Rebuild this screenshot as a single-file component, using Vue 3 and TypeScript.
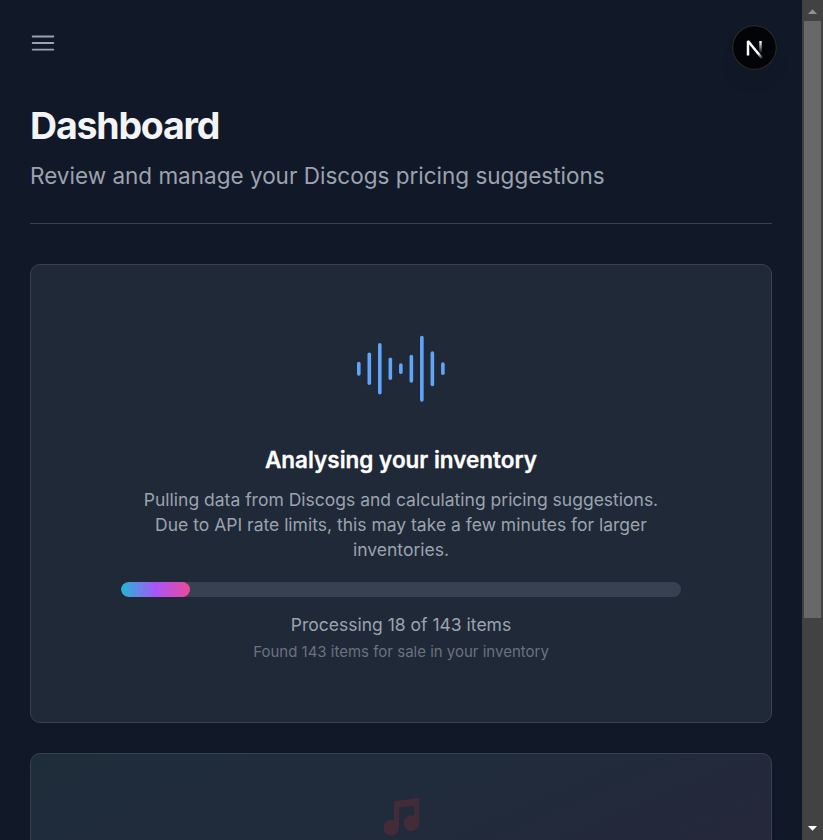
<script setup lang="ts">
interface Bar { x: number; h: number }

const heights: number[] = [14, 32.5, 51.5, 22.5, 10.7, 28, 66, 35, 12.7]
const bars: Bar[] = heights.map((h, i) => ({ x: 2.8 + i * 10.51, h }))

const processed = 18
const total = 143
const percent = 12.4
</script>

<template>
  <div class="window">
    <main class="page">
      <header class="topbar">
        <button class="menu" aria-label="Menu">
          <svg width="30" height="30" viewBox="0 0 24 24" fill="none" stroke="currentColor" stroke-width="1.5" stroke-linecap="round">
            <path d="M3.75 6.75h16.5M3.75 12h16.5M3.75 17.25h16.5" />
          </svg>
        </button>
      </header>

      <section class="heading">
        <h1>Dashboard</h1>
        <p>Review and manage your Discogs pricing suggestions</p>
      </section>

      <section class="card progress-card">
        <svg class="wave" width="90" height="87" viewBox="0 0 90 87">
          <rect v-for="b in bars" :key="b.x" :x="b.x - 1.8" :y="43.7 - b.h / 2" width="3.6" :height="b.h" rx="1.8" fill="#60a5fa" />
        </svg>
        <h2>Analysing your inventory</h2>
        <p class="description">
          Pulling data from Discogs and calculating pricing suggestions. Due to API rate limits, this may take a few minutes for larger inventories.
        </p>
        <div class="track"><div class="fill" :style="{ width: percent + '%' }"></div></div>
        <p class="status">Processing {{ processed }} of {{ total }} items</p>
        <p class="found">Found {{ total }} items for sale in your inventory</p>
      </section>

      <section class="card music-card">
        <svg width="36" height="38" viewBox="0 0 36 38" fill="#432c37">
          <path d="M10 3.2 35.2 0v25.2a7.8 7.8 0 1 1-5-7.3V8L15 9.6v20a7.8 7.8 0 1 1-5-7.3z" />
        </svg>
      </section>
    </main>

    <aside class="scrollbar">
      <svg class="arrow" width="21" height="21" viewBox="0 0 21 21"><path d="M6 14 10.5 9.3 15 14z" fill="#929292" /></svg>
      <div class="thumb"></div>
      <svg class="arrow down" width="21" height="21" viewBox="0 0 21 21"><path d="M6 7h9l-4.5 4.8z" fill="#fff" /></svg>
    </aside>

    <div class="badge">
      <svg width="45" height="45" viewBox="0 0 45 45" fill="none">
        <defs>
          <linearGradient id="diag" x1="9.96" y1="11.12" x2="15.48" y2="17.97" gradientUnits="userSpaceOnUse">
            <stop stop-color="#fff" /><stop offset=".604" stop-color="#fff" stop-opacity="0" />
          </linearGradient>
          <linearGradient id="stem" x1="11.82" y1="1.4" x2="11.79" y2="11" gradientUnits="userSpaceOnUse">
            <stop stop-color="#fff" /><stop offset="1" stop-color="#fff" stop-opacity="0" />
          </linearGradient>
        </defs>
        <g transform="translate(12.9 14.7) scale(1.32 1.25)" stroke-width="1.86" stroke-linejoin="bevel">
          <path d="M13.3 15.2 2.34 1v11.6" stroke="url(#diag)" />
          <path d="M11.825 1.1v11.6" stroke="url(#stem)" />
        </g>
      </svg>
    </div>
  </div>
</template>

<style>
body { margin: 0; overflow: hidden; background: #111827; }
</style>

<style scoped>
* { box-sizing: border-box; }
h1, h2, p { margin: 0; }
.window {
  position: relative;
  display: flex;
  width: 823px;
  height: 840px;
  overflow: hidden;
  background: #111827;
  font-family: Inter, "Liberation Sans", sans-serif;
}
.page { flex: 1; min-width: 0; height: 840px; overflow: hidden; padding: 28px 30px 0; }
.topbar { display: flex; height: 75px; }
.menu { display: flex; width: 30px; height: 30px; margin-left: -2px; padding: 0; border: 0; background: none; color: #9ca3af; }
.heading { height: 121px; border-bottom: 1px solid #374151; }
h1 { font-size: 37.5px; line-height: 45px; font-weight: 700; letter-spacing: -0.032em; color: #f3f4f6; }
.heading p { margin-top: 10px; font-size: 22.5px; line-height: 35px; color: #9ca3af; }
.card { display: flex; flex-direction: column; align-items: center; border: 1px solid #374151; border-radius: 10px; background: #1f2937; }
.progress-card { height: 459px; margin-top: 40px; padding-top: 60px; }
.wave { display: block; }
h2 { margin-top: 30px; font-size: 22.5px; line-height: 35px; font-weight: 600; color: #fff; -webkit-text-stroke: 0.3px #fff; }
.description { width: 540px; margin-top: 10px; font-size: 17.5px; line-height: 25px; text-align: center; color: #9ca3af; }
.track { width: 560px; height: 15px; margin-top: 20px; border-radius: 8px; background: #374151; overflow: hidden; }
.fill { height: 15px; border-radius: 8px; background: linear-gradient(to right, #22b8d4, #a855f7 50%, #ec4899); }
.status { margin-top: 15px; font-size: 17.5px; line-height: 25px; color: #9ca3af; }
.found { margin-top: 5px; font-size: 15px; line-height: 20px; color: #6b7280; }
.music-card { height: 320px; margin-top: 30px; padding-top: 44px; background: linear-gradient(to bottom right, #1f2d3b, #212b3b 40%, #25283b 62%, #2a273c); }
.music-card svg { flex: none; margin-left: 1px; }
.scrollbar { display: flex; flex-direction: column; width: 21px; height: 840px; background: #424242; }
.arrow { display: block; flex: none; }
.arrow.down { margin-top: auto; }
.thumb { height: 597px; margin: 0 2px; background: #686868; }
.badge {
  position: absolute;
  top: 25px;
  left: 732px;
  width: 45px;
  height: 45px;
  border-radius: 50%;
  background: #030407;
  box-shadow: inset 0 0 0 1.25px #2a2a2b, 0 14px 24px -8px rgba(0, 0, 0, 0.1);
}
.badge svg { display: block; }
</style>
